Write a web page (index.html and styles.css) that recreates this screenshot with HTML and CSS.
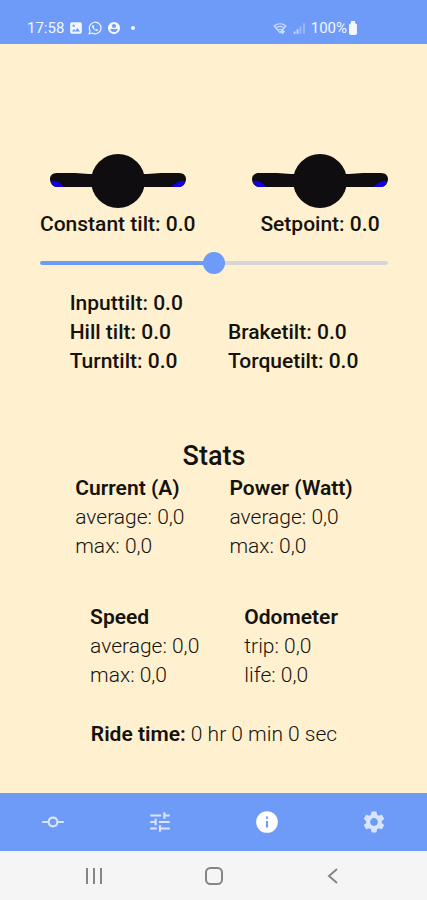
FILE: index.html
```
<!DOCTYPE html>
<html lang="en">
<head>
<meta charset="utf-8">
<meta name="viewport" content="width=device-width, initial-scale=1">
<title>Ride stats</title>
<link rel="stylesheet" href="styles.css">
</head>
<body>
<header class="status">
  <div class="status-group">
    <span>17:58</span>
    <svg class="status-icon" viewBox="0 0 24 24" aria-hidden="true"><path fill-rule="evenodd" d="M5 2h14a3 3 0 0 1 3 3v14a3 3 0 0 1-3 3H5a3 3 0 0 1-3-3V5a3 3 0 0 1 3-3zM5 18h14l-4.500-6-3.500 4.500-2.500-3zM8 6a2 2 0 1 0 0 4 2 2 0 0 0 0-4z"/></svg>
    <svg class="status-icon" viewBox="0 0 24 24" aria-hidden="true"><path d="M2 22l1.500-5.200A10 10 0 1 1 7.200 20.600z" fill="none" stroke="currentColor" stroke-width="2"/><path d="M8.500 6.500c-1.500.8-2 2.300-1.200 4.200 1.200 2.800 3.300 4.900 6.100 6 2 .8 3.500 0 4-1.700l-2.700-1.500-1.300 1.300c-1.600-.7-2.800-1.900-3.500-3.400l1-1.400z"/></svg>
    <svg class="status-icon" viewBox="0 0 24 24" aria-hidden="true"><path fill-rule="evenodd" d="M12 1.500a10.500 10.500 0 1 0 0 21 10.500 10.500 0 0 0 0-21zM12 5a3.500 3.500 0 1 1 0 7 3.500 3.500 0 0 1 0-7zM5.500 13.500h13c-.8 3.500-3.300 5.500-6.500 5.500s-5.700-2-6.500-5.500z"/></svg>
    <span class="status-dot"></span>
  </div>
  <div class="status-group status-right">
    <svg class="status-icon faint" viewBox="0 0 24 24" aria-hidden="true"><g fill="none" stroke="currentColor" stroke-width="2"><path d="M2 8.500c6-5 14-5 20 0L12 20z"/><path d="M5 12c4.500-3.500 9.500-3.500 14 0M8.500 15.500c2-1.500 5-1.500 7 0"/></g><path d="M15 14h3v3h3l-4.500 6-4.500-6h3z"/></svg>
    <svg class="status-icon faint" viewBox="0 0 24 24" aria-hidden="true"><path d="M3 18h3v4H3zM8 14h3v8H8z"/><path opacity=".5" d="M13 9h3v13h-3zM19 4h3v18h-3z"/></svg>
    <span>100%</span>
    <svg class="battery" viewBox="0 0 10 14" aria-hidden="true"><path d="M3 0h4v2l2 1.500V12a2 2 0 0 1-2 2H3a2 2 0 0 1-2-2V3.500L3 2z"/></svg>
  </div>
</header>

<main class="content">
  <section class="gauges">
    <div class="gauge">
      <svg class="board" viewBox="0 0 136 56" aria-hidden="true"><path fill="#100d10" d="M7 20h18l14 1h58l14-1h18c5 0 7 3 7 6s-2 8-7 8H7c-5 0-7-5-7-8s2-6 7-6z"/><path fill="#1400e8" d="M1 28c5-1 10 2 13 6H7c-3 0-5-3-6-6zM135 28c-5-1-10 2-13 6h7c3 0 5-3 6-6z"/><circle fill="#100d10" cx="68" cy="28" r="27"/></svg>
      <label for="tilt">Constant tilt: 0.0</label>
    </div>
    <div class="gauge">
      <svg class="board" viewBox="0 0 136 56" aria-hidden="true"><path fill="#100d10" d="M7 20h18l14 1h58l14-1h18c5 0 7 3 7 6s-2 8-7 8H7c-5 0-7-5-7-8s2-6 7-6z"/><path fill="#1400e8" d="M1 28c5-1 10 2 13 6H7c-3 0-5-3-6-6zM135 28c-5-1-10 2-13 6h7c3 0 5-3 6-6z"/><circle fill="#100d10" cx="68" cy="28" r="27"/></svg>
      <span>Setpoint: 0.0</span>
    </div>
  </section>

  <input class="slider" id="tilt" type="range" min="-10" max="10" value="0" step="0.1">

  <section class="pair tilts">
    <div>
      <p>Inputtilt: 0.0</p>
      <p>Hill tilt: 0.0</p>
      <p>Turntilt: 0.0</p>
    </div>
    <div>
      <p>Braketilt: 0.0</p>
      <p>Torquetilt: 0.0</p>
    </div>
  </section>

  <h1 class="title">Stats</h1>
  <section class="pair stats">
    <div>
      <h2>Current (A)</h2>
      <p>average: 0,0</p>
      <p>max: 0,0</p>
    </div>
    <div>
      <h2>Power (Watt)</h2>
      <p>average: 0,0</p>
      <p>max: 0,0</p>
    </div>
  </section>
  <section class="pair stats">
    <div>
      <h2>Speed</h2>
      <p>average: 0,0</p>
      <p>max: 0,0</p>
    </div>
    <div>
      <h2>Odometer</h2>
      <p>trip: 0,0</p>
      <p>life: 0,0</p>
    </div>
  </section>
  <p class="ride"><strong>Ride time:</strong> 0 hr 0 min 0 sec</p>
</main>

<nav class="tabs">
  <a href="#board" aria-label="Board"><svg viewBox="0 0 24 24"><path d="M16.900 11H22v2h-5.100a5 5 0 0 1-9.800 0H2v-2h5.100a5 5 0 0 1 9.800 0zM12 15a3 3 0 1 0 0-6 3 3 0 0 0 0 6z"/></svg></a>
  <a href="#tune" aria-label="Tune"><svg viewBox="0 0 24 24"><path d="M3 17v2h6v-2H3zM3 5v2h10V5H3zm10 16v-2h8v-2h-8v-2h-2v6h2zM7 9v2H3v2h4v2h2V9H7zm14 4v-2H11v2h10zm-6-4h2V7h4V5h-4V3h-2v6z"/></svg></a>
  <a class="active" href="#stats" aria-label="Stats" aria-current="page"><svg viewBox="0 0 24 24"><path d="M12 2a10 10 0 1 0 0 20 10 10 0 0 0 0-20zm1 15h-2v-6h2v6zm0-8h-2V7h2v2z"/></svg></a>
  <a href="#settings" aria-label="Settings"><svg viewBox="0 0 24 24"><path d="M19.140 12.940c.04-.3.060-.61.060-.94 0-.32-.02-.64-.07-.94l2.030-1.580c.18-.14.230-.41.120-.61l-1.920-3.320c-.12-.22-.37-.29-.59-.22l-2.390.96c-.5-.38-1.030-.7-1.620-.94l-.36-2.540c-.04-.24-.24-.41-.48-.41h-3.840c-.24 0-.43.170-.47.410l-.36 2.540c-.59.240-1.130.570-1.620.940l-2.390-.96c-.22-.08-.47 0-.59.220L2.740 8.870c-.12.210-.08.470.12.610l2.030 1.580c-.05.300-.09.630-.09.940s.02.640.07.940l-2.030 1.580c-.18.140-.23.410-.12.610l1.920 3.320c.12.220.37.290.59.220l2.390-.96c.5.380 1.030.700 1.620.940l.36 2.540c.05.240.24.410.48.410h3.840c.24 0 .44-.17.47-.41l.36-2.540c.59-.24 1.130-.56 1.620-.94l2.390.96c.22.080.47 0 .59-.22l1.920-3.320c.12-.22.070-.47-.12-.61l-2.010-1.580zM12 15.600c-1.980 0-3.600-1.620-3.600-3.600s1.620-3.600 3.600-3.600 3.600 1.620 3.600 3.600-1.620 3.600-3.600 3.600z"/></svg></a>
</nav>

<footer class="system">
  <button type="button" aria-label="Recent apps"><svg viewBox="0 0 20 20"><path d="M3 2v16M10 2v16M17 2v16"/></svg></button>
  <button type="button" aria-label="Home"><svg viewBox="0 0 20 20"><rect x="2" y="2" width="16" height="16" rx="4.500"/></svg></button>
  <button type="button" aria-label="Back"><svg viewBox="0 0 20 20"><path d="M14 3l-8 7 8 7"/></svg></button>
</footer>
</body>
</html>
```
FILE: styles.css
```
* {
  box-sizing: border-box;
}

body {
  margin: 0;
  min-height: 100vh;
  display: flex;
  flex-direction: column;
  background: #fff1cf;
  color: #15120e;
  font-family: Roboto, sans-serif;
  font-size: 21px;
  line-height: 29px;
}

h1,
h2,
p {
  margin: 0;
}

h2 {
  font-size: 21px;
  font-weight: 600;
}

.status {
  display: flex;
  justify-content: space-between;
  padding: 16px 69px 4px 27px;
  background: #6e9bf8;
  color: #f2f6ff;
  font-size: 15px;
  line-height: 24px;
}

.status-group {
  display: flex;
  align-items: center;
  gap: 5px;
}

.status-icon {
  width: 14px;
  height: 14px;
  fill: currentColor;
}

.faint {
  opacity: 0.75;
}

.status-dot {
  width: 4px;
  height: 4px;
  margin-left: 5px;
  border-radius: 50%;
  background: currentColor;
}

.battery {
  width: 10px;
  height: 14px;
  margin-left: -4px;
  fill: currentColor;
}

.content {
  flex: 1;
  display: flex;
  flex-direction: column;
  padding: 109px 39px 40px 40px;
}

.gauges {
  display: flex;
  justify-content: space-between;
  font-weight: 500;
}

.gauge {
  display: flex;
  flex-direction: column;
  align-items: center;
}

.board {
  width: 136px;
  height: 56px;
  margin-bottom: 1px;
}

.slider {
  appearance: none;
  width: 100%;
  height: 24px;
  margin: 12px 0 14px;
  background: transparent;
}

.slider::-webkit-slider-runnable-track {
  height: 4px;
  border-radius: 2px;
  background: linear-gradient(to right, #6e9bf8 50%, #d6d5d8 50%);
}

.slider::-webkit-slider-thumb {
  appearance: none;
  width: 22px;
  height: 22px;
  margin-top: -9px;
  border-radius: 50%;
  background: #6e9bf8;
}

.pair {
  display: flex;
  justify-content: center;
  align-items: flex-end;
  gap: 45px;
}

.tilts {
  margin-bottom: 62px;
  font-weight: 500;
}

.title {
  font-size: 27px;
  font-weight: 500;
  line-height: 36px;
  text-align: center;
}

.stats {
  margin-bottom: 42px;
  font-weight: 350;
}

.stats + .stats {
  margin-bottom: 30px;
}

.ride {
  font-weight: 350;
  text-align: center;
}

.ride strong {
  font-weight: 600;
}

.tabs {
  display: flex;
  background: #6e9bf8;
}

.tabs a {
  flex: 1;
  display: flex;
  justify-content: center;
  padding: 16px 0;
  color: #d9e5ff;
}

.tabs .active {
  color: #ffffff;
}

.tabs svg {
  width: 26px;
  height: 26px;
  fill: currentColor;
}

.system {
  display: flex;
  padding: 0 8%;
  background: #f5f5f5;
}

.system button {
  flex: 1;
  display: flex;
  justify-content: center;
  padding: 15px 0 14px;
  border: 0;
  background: none;
  color: #858585;
}

.system svg {
  width: 20px;
  height: 20px;
  fill: none;
  stroke: currentColor;
  stroke-width: 2;
}
```
